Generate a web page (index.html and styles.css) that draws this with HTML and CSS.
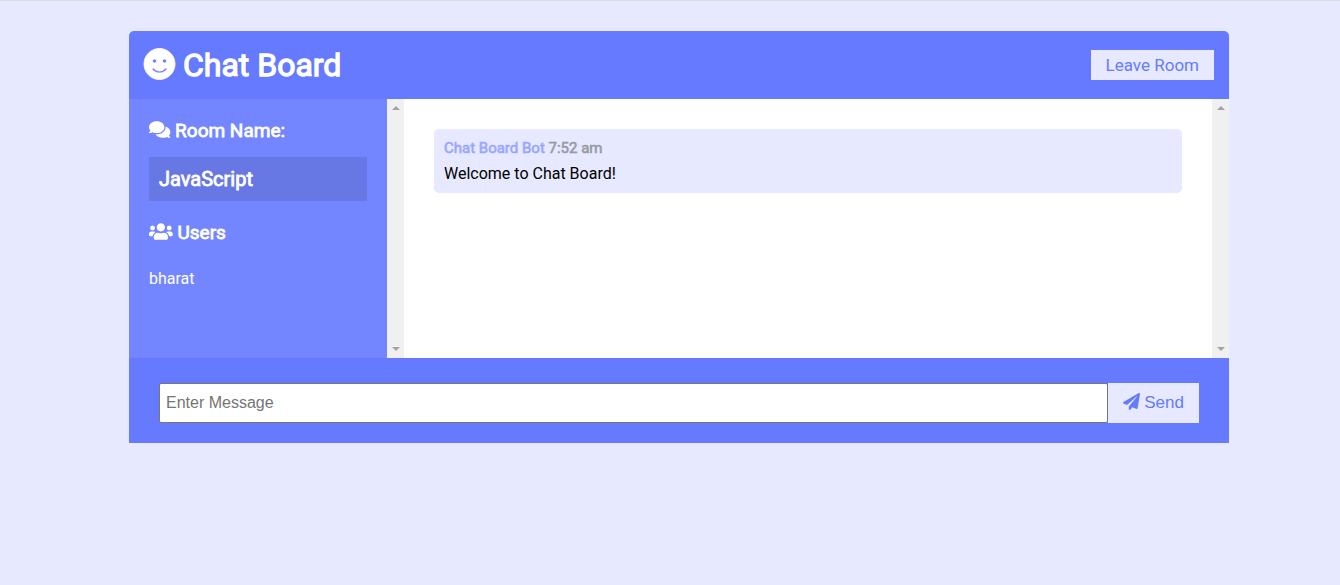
FILE: index.html
```html
<!DOCTYPE html>
<html lang="en">
<head>
<meta charset="UTF-8">
<meta name="viewport" content="width=device-width, initial-scale=1">
<title>Chat Board</title>
<link rel="stylesheet" href="styles.css">
</head>
<body>
<div class="chat-container">
  <header class="chat-header">
    <h1 class="brand"><svg class="icon" viewBox="0 0 496 512" aria-hidden="true"><path d="M248 8C111 8 0 119 0 256s111 248 248 248 248-111 248-248S385 8 248 8zm80 168c17.700 0 32 14.300 32 32s-14.300 32-32 32-32-14.300-32-32 14.300-32 32-32zm-160 0c17.700 0 32 14.300 32 32s-14.300 32-32 32-32-14.300-32-32 14.300-32 32-32zm194.800 170.200C334.300 380.400 292.500 400 248 400s-86.300-19.600-114.800-53.800c-13.600-16.300 11-36.700 24.600-20.500 22.400 26.900 55.200 42.200 90.200 42.200s67.800-15.400 90.200-42.200c13.400-16.200 38.100 4.200 24.600 20.500z"/></svg> Chat Board</h1>
    <a class="btn" href="#">Leave Room</a>
  </header>
  <main class="chat-main">
    <aside class="pane chat-sidebar">
      <div class="sidebar-content">
        <h3 class="label"><svg class="icon" viewBox="0 0 576 512" aria-hidden="true"><path d="M416 192c0-88.400-93.100-160-208-160S0 103.600 0 192c0 34.300 14.100 65.900 38 92-13.400 30.200-35.500 54.200-35.800 54.500-2.200 2.300-2.800 5.700-1.500 8.700S4.800 352 8 352c36.600 0 66.900-12.300 88.700-25 32.200 15.700 70.300 25 111.300 25 114.900 0 208-71.600 208-160zm122 220c23.900-26 38-57.700 38-92 0-66.900-53.500-124.200-129.300-148.100.9 6.600 1.300 13.300 1.300 20.100 0 105.900-107.700 192-240 192-10.800 0-21.300-.8-31.700-1.900C207.800 439.600 281.800 480 368 480c41 0 79.100-9.200 111.300-25 21.800 12.700 52.100 25 88.700 25 3.200 0 6.100-1.900 7.300-4.800 1.300-2.900.7-6.300-1.500-8.700-.3-.3-22.400-24.200-35.800-54.500z"/></svg> Room Name:</h3>
        <h2 class="room-name">JavaScript</h2>
        <h3 class="label"><svg class="icon" viewBox="0 0 640 512" aria-hidden="true"><path d="M96 224c35.300 0 64-28.700 64-64s-28.700-64-64-64-64 28.700-64 64 28.700 64 64 64zm448 0c35.300 0 64-28.700 64-64s-28.700-64-64-64-64 28.700-64 64 28.700 64 64 64zm32 32h-64c-17.600 0-33.500 7.100-45.100 18.600 40.300 22.100 68.900 62 75.100 109.400h66c17.700 0 32-14.300 32-32v-32c0-35.300-28.700-64-64-64zm-256 0c61.900 0 112-50.100 112-112S381.900 32 320 32 208 82.100 208 144s50.100 112 112 112zm76.800 32h-8.300c-20.800 10-43.900 16-68.500 16s-47.600-6-68.500-16h-8.300C179.600 288 128 339.600 128 403.200V432c0 26.500 21.500 48 48 48h288c26.500 0 48-21.500 48-48v-28.800c0-63.600-51.600-115.200-115.200-115.200zm-223.700-13.400C161.500 263.100 145.600 256 128 256H64c-35.300 0-64 28.700-64 64v32c0 17.700 14.300 32 32 32h65.900c6.300-47.400 34.900-87.300 75.200-109.400z"/></svg> Users</h3>
        <ul class="users"><li>bharat</li></ul>
      </div>
      <div class="scrollbar" aria-hidden="true"><i class="arrow up"></i><i class="arrow down"></i></div>
    </aside>
    <section class="pane chat-messages">
      <div class="message-list">
        <article class="message">
          <p class="meta">Chat Board Bot <time>7:52 am</time></p>
          <p class="text">Welcome to Chat Board!</p>
        </article>
      </div>
      <div class="scrollbar" aria-hidden="true"><i class="arrow up"></i><i class="arrow down"></i></div>
    </section>
  </main>
  <footer class="chat-form-container">
    <form class="chat-form">
      <input class="msg" type="text" placeholder="Enter Message" aria-label="Enter Message" autocomplete="off">
      <button class="btn send" type="button"><svg class="icon" viewBox="0 0 512 512" aria-hidden="true"><path d="M476 3.200L12.500 270.600c-18.100 10.400-15.800 35.600 2.200 43.200L121 358.400l287.300-253.200c5.500-4.900 13.300 2.600 8.600 8.300L176 407v80.500c0 23.600 28.500 32.900 42.500 15.800L282 426l124.600 52.200c14.200 6 30.400-2.900 33-18.200l72-432C515 7.800 493.300-6.800 476 3.200z"/></svg> Send</button>
    </form>
  </footer>
</div>
</body>
</html>
```
FILE: styles.css
```css
:root {
  --dark: #667aff;
  --light: #7386ff;
  --pale: #e6e9ff;
}

* {
  box-sizing: border-box;
  margin: 0;
  padding: 0;
}

body {
  min-height: 100vh;
  padding: 30px 0 30px 18px;
  border-top: 1px solid #dadce0;
  background: var(--pale);
  font-family: Roboto, "Liberation Sans", sans-serif;
  font-size: 16px;
  line-height: 20px;
}

.icon {
  display: inline-block;
  height: 1em;
  overflow: visible;
  vertical-align: -0.125em;
  fill: currentColor;
}

.chat-container {
  max-width: 1100px;
  margin: 0 auto;
}

.chat-header {
  display: flex;
  align-items: center;
  justify-content: space-between;
  padding: 15px;
  border-radius: 5px 5px 0 0;
  background: var(--dark);
  color: #fff;
}

.brand,
.label,
.room-name,
.meta {
  font-weight: 400;
  -webkit-text-stroke: 0.04em currentColor;
}

.brand {
  font-size: 32px;
  line-height: 38px;
}

.brand .icon {
  stroke: currentColor;
  stroke-width: 14;
}

.btn {
  padding: 5px 15px;
  border: 0;
  background: var(--pale);
  color: var(--dark);
  font-size: 17px;
  text-decoration: none;
}

.chat-main {
  display: grid;
  grid-template-columns: 1fr 3fr;
}

.pane {
  display: flex;
  min-height: 259px;
}

.chat-sidebar {
  background: var(--light);
  color: #fff;
}

.sidebar-content {
  flex: 1;
  padding: 20px;
}

.label {
  margin-bottom: 15px;
  font-size: 19px;
  line-height: 23px;
}

.room-name {
  margin-bottom: 20px;
  padding: 10px;
  background: rgba(0, 0, 0, 0.1);
  font-size: 20px;
  line-height: 24px;
}

.users {
  list-style: none;
}

.users li {
  padding: 10px 0;
}

.chat-messages {
  background: #fff;
}

.message-list {
  flex: 1;
  padding: 30px;
}

.message {
  padding: 10px;
  border-radius: 5px;
  background: var(--pale);
}

.meta {
  margin-bottom: 8px;
  color: var(--dark);
  font-size: 15px;
  line-height: 18px;
  opacity: 0.6;
}

.meta time {
  color: #666;
}

.text {
  line-height: 18px;
}

.scrollbar {
  display: flex;
  flex-direction: column;
  align-items: center;
  justify-content: space-between;
  width: 17px;
  padding: 7px 0;
  background: #f0f0f0;
}

.arrow {
  border: 4px solid transparent;
}

.arrow.up {
  border-top: 0;
  border-bottom-color: #a3a3a3;
}

.arrow.down {
  border-bottom: 0;
  border-top-color: #a3a3a3;
}

.chat-form-container {
  padding: 25px 30px 20px;
  background: var(--dark);
}

.chat-form {
  display: flex;
}

.msg {
  flex: 1;
  min-width: 0;
  height: 40px;
  padding: 0 6px;
  border: 1px solid #767676;
  border-radius: 2px;
  background: #fff;
  font: 16px "Liberation Sans", Arial, sans-serif;
}

.msg::placeholder {
  color: #757575;
}

.send {
  font-family: "Liberation Sans", Arial, sans-serif;
}
```
